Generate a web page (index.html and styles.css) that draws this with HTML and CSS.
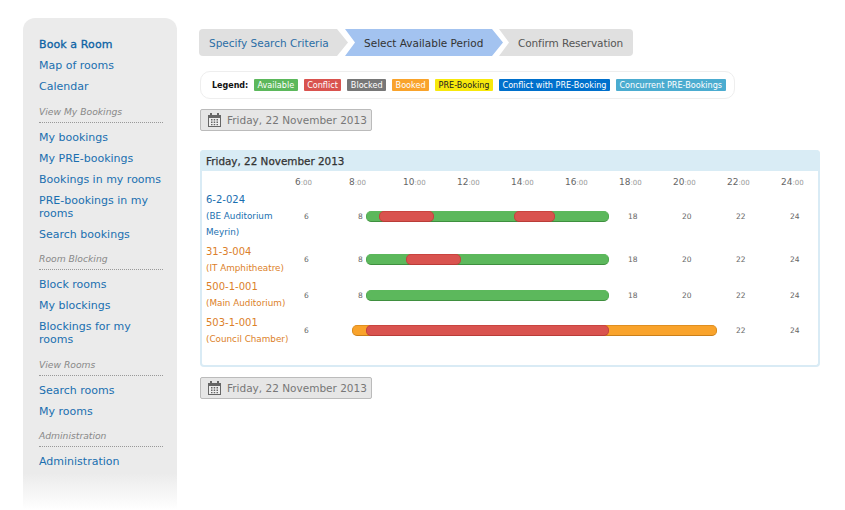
FILE: index.html
```html
<!DOCTYPE html>
<html lang="en">
<head>
  <meta charset="UTF-8">
  <title>Select Available Period</title>
  <link rel="stylesheet" href="styles.css">
</head>
<body>
  <nav class="sidebar">
    <ul class="menu">
      <li><a class="strong" href="#">Book a Room</a></li>
      <li><a href="#">Map of rooms</a></li>
      <li><a href="#">Calendar</a></li>
    </ul>
    <div class="menu-title">View My Bookings</div>
    <ul class="menu">
      <li><a href="#">My bookings</a></li>
      <li><a href="#">My PRE-bookings</a></li>
      <li><a href="#">Bookings in my rooms</a></li>
      <li><a href="#">PRE-bookings in my rooms</a></li>
      <li><a href="#">Search bookings</a></li>
    </ul>
    <div class="menu-title">Room Blocking</div>
    <ul class="menu">
      <li><a href="#">Block rooms</a></li>
      <li><a href="#">My blockings</a></li>
      <li><a href="#">Blockings for my rooms</a></li>
    </ul>
    <div class="menu-title">View Rooms</div>
    <ul class="menu">
      <li><a href="#">Search rooms</a></li>
      <li><a href="#">My rooms</a></li>
    </ul>
    <div class="menu-title">Administration</div>
    <ul class="menu">
      <li><a href="#">Administration</a></li>
    </ul>
  </nav>

  <main class="content">
    <div class="steps">
      <a class="step step-first" href="#">Specify Search Criteria</a>
      <span class="step step-current">Select Available Period</span>
      <span class="step step-last">Confirm Reservation</span>
    </div>

    <div class="legend">
      <strong class="legend-title">Legend:</strong>
      <span class="tag available">Available</span>
      <span class="tag conflict">Conflict</span>
      <span class="tag blocked">Blocked</span>
      <span class="tag booked">Booked</span>
      <span class="tag prebooking">PRE-Booking</span>
      <span class="tag preconflict">Conflict with PRE-Booking</span>
      <span class="tag concurrent">Concurrent PRE-Bookings</span>
    </div>

    <button class="date-btn" type="button">
      <svg class="cal" width="13" height="14" viewBox="0 0 13 14"><path fill="#666" d="M0 2h2V0h2v2h5V0h2v2h2v12H0z"/><path fill="#eee" d="M1 5h11v8H1z"/><path fill="#666" d="M3 6h1.500v1.500H3zM5.700 6h1.500v1.500H5.700zM8.500 6H10v1.500H8.500zM3 8.500h1.500V10H3zM5.700 8.500h1.500V10H5.700zM8.500 8.500H10V10H8.500zM3 11h1.500v1.200H3zM5.700 11h1.500v1.200H5.700zM8.500 11H10v1.200H8.500z"/></svg>
      Friday, 22 November 2013
    </button>

    <section class="day">
      <h2 class="day-title">Friday, 22 November 2013</h2>
      <div class="day-body">
        <div class="hours">
          <span class="hour">6<small>:00</small></span>
          <span class="hour">8<small>:00</small></span>
          <span class="hour">10<small>:00</small></span>
          <span class="hour">12<small>:00</small></span>
          <span class="hour">14<small>:00</small></span>
          <span class="hour">16<small>:00</small></span>
          <span class="hour">18<small>:00</small></span>
          <span class="hour">20<small>:00</small></span>
          <span class="hour">22<small>:00</small></span>
          <span class="hour">24<small>:00</small></span>
        </div>

        <div class="room">
          <a class="room-name" href="#">6-2-024<small>(BE Auditorium Meyrin)</small></a>
          <div class="timeline">
            <span>6</span><span>8</span><span></span><span></span><span></span><span></span><span>18</span><span>20</span><span>22</span><span>24</span>
            <i class="bar bar-free" style="left:87px;width:243px"></i>
            <i class="bar bar-conflict" style="left:100px;width:55px"></i>
            <i class="bar bar-conflict" style="left:235px;width:41px"></i>
          </div>
        </div>

        <div class="room">
          <a class="room-name orange" href="#">31-3-004<small>(IT Amphitheatre)</small></a>
          <div class="timeline">
            <span>6</span><span>8</span><span></span><span></span><span></span><span></span><span>18</span><span>20</span><span>22</span><span>24</span>
            <i class="bar bar-free" style="left:87px;width:243px"></i>
            <i class="bar bar-conflict" style="left:127px;width:55px"></i>
          </div>
        </div>

        <div class="room">
          <a class="room-name orange" href="#">500-1-001<small>(Main Auditorium)</small></a>
          <div class="timeline">
            <span>6</span><span>8</span><span></span><span></span><span></span><span></span><span>18</span><span>20</span><span>22</span><span>24</span>
            <i class="bar bar-free" style="left:87px;width:243px"></i>
          </div>
        </div>

        <div class="room">
          <a class="room-name orange" href="#">503-1-001<small>(Council Chamber)</small></a>
          <div class="timeline">
            <span>6</span><span></span><span></span><span></span><span></span><span></span><span></span><span></span><span>22</span><span>24</span>
            <i class="bar bar-booked" style="left:73px;width:365px"></i>
            <i class="bar bar-conflict" style="left:87px;width:243px"></i>
          </div>
        </div>
      </div>
    </section>

    <button class="date-btn" type="button">
      <svg class="cal" width="13" height="14" viewBox="0 0 13 14"><path fill="#666" d="M0 2h2V0h2v2h5V0h2v2h2v12H0z"/><path fill="#eee" d="M1 5h11v8H1z"/><path fill="#666" d="M3 6h1.500v1.500H3zM5.700 6h1.500v1.500H5.700zM8.500 6H10v1.500H8.500zM3 8.500h1.500V10H3zM5.700 8.500h1.500V10H5.700zM8.500 8.500H10V10H8.500zM3 11h1.500v1.200H3zM5.700 11h1.500v1.200H5.700zM8.500 11H10v1.200H8.500z"/></svg>
      Friday, 22 November 2013
    </button>
  </main>
</body>
</html>
```

FILE: styles.css
```css
* {
  box-sizing: border-box;
}

html, body {
  height: 510px;
  overflow: hidden;
}

body {
  display: flex;
  align-items: flex-start;
  margin: 0;
  background-color: white;
  font-family: 'DejaVu Sans', Verdana, sans-serif;
  font-size: 11px;
  color: #444;
}

a {
  text-decoration: none;
}

/* sidebar */

.sidebar {
  flex: none;
  width: 154px;
  height: 492px;
  margin: 18px 0 0 23px;
  padding: 20px 14px 0 16px;
  border-radius: 12px 12px 0 0;
  background: linear-gradient(to bottom, #ebebeb 0, #ebebeb 455px, #ffffff 492px);
}

.menu {
  list-style: none;
  margin: 0;
  padding: 0;
}

.menu li {
  margin-bottom: 8px;
  line-height: 13px;
}

.menu a {
  color: #1a6fb0;
}

.menu a.strong {
  color: #0b62a4;
  -webkit-text-stroke: 0.3px #0b62a4;
  letter-spacing: 0.1px;
}

.menu-title {
  margin: 11.500px 0 8px;
  padding-bottom: 4px;
  border-bottom: 1px dotted #999;
  font-size: 9.200px;
  line-height: 13px;
  font-style: italic;
  color: #888;
}

/* main column */

.content {
  flex: none;
  width: 621px;
  margin: 29px 0 0 23px;
}

.steps {
  display: flex;
  margin-left: -1px;
  height: 27px;
  font-size: 10.500px;
}

.step {
  display: flex;
  align-items: center;
  height: 27px;
  background-color: #e0e0e0;
  color: #555;
}

.step-first {
  width: 149px;
  padding-left: 10px;
  border-radius: 4px 0 0 4px;
  color: #2b6ea6;
  clip-path: polygon(0 0, 138px 0, 149px 50%, 138px 100%, 0 100%);
}

.step-current {
  width: 158px;
  margin-left: -3px;
  padding-left: 19px;
  background-color: #a3c3f0;
  color: #333;
  clip-path: polygon(0 0, 147px 0, 158px 50%, 147px 100%, 0 100%, 10px 50%);
}

.step-last {
  width: 134px;
  margin-left: -4px;
  padding-left: 19px;
  border-radius: 0 4px 4px 0;
  letter-spacing: -0.1px;
  clip-path: polygon(0 0, 100% 0, 100% 100%, 0 100%, 10px 50%);
}

.legend {
  display: flex;
  align-items: center;
  width: 535px;
  height: 28px;
  margin-top: 15px;
  padding-left: 11px;
  border: 1px solid #eee;
  border-radius: 10px;
}

.legend-title {
  flex: none;
  width: 42px;
  font-size: 8px;
  color: #111;
}

.tag {
  flex: none;
  height: 12px;
  margin-right: 6px;
  padding: 0 3.500px;
  border-radius: 1px;
  line-height: 12px;
  font-size: 8.100px;
  white-space: nowrap;
  color: white;
}

.available { background-color: #5cb85c; }
.conflict { background-color: #d9534f; }
.blocked { background-color: #777; }
.booked { background-color: #f9a32b; }
.prebooking { background-color: #f7e80c; color: #222; }
.preconflict { background-color: #0070cc; }
.concurrent { background-color: #4bacd0; }

.date-btn {
  display: flex;
  align-items: center;
  gap: 6px;
  width: 172px;
  height: 22px;
  margin: 10px 0 0;
  padding: 0 0 0 7px;
  border: 1px solid #bbb;
  border-radius: 2px;
  background-color: #e6e6e6;
  font-family: inherit;
  font-size: 10.500px;
  color: #777;
}

.day {
  width: 620px;
  margin-top: 19px;
  border: 1px solid #d9ebf5;
  border-width: 0 2px 2px;
  border-radius: 4px;
}

.day-title {
  height: 21px;
  margin: 0 -2px;
  padding-left: 6px;
  border-radius: 4px 4px 0 0;
  background-color: #d9ecf5;
  font-size: 10.400px;
  line-height: 22px;
  font-weight: normal;
  -webkit-text-stroke: 0.25px #333;
  color: #333;
}

.day-body {
  height: 194px;
  padding: 6px 0 0 4px;
}

.hours {
  display: flex;
  height: 15px;
  margin-left: 89px;
}

.hour {
  flex: none;
  width: 54px;
  font-size: 9px;
  line-height: 10px;
  color: #666;
}

.hour small {
  font-size: 7px;
  color: #999;
}

.room {
  display: flex;
  align-items: center;
  margin-bottom: 3.500px;
}

.room-name {
  flex: none;
  width: 88px;
  font-size: 10px;
  line-height: 16px;
  color: #1a6fb0;
}

.room-name.orange {
  color: #dc7f2a;
}

.room-name small {
  display: block;
  font-size: 8.800px;
}

.timeline {
  position: relative;
  display: flex;
  height: 11px;
  margin-left: -15px;
}

.timeline span {
  flex: none;
  width: 54px;
  padding-left: 25px;
  font-size: 7.500px;
  line-height: 12px;
  color: #666;
}

.bar {
  position: absolute;
  top: 0;
  height: 11px;
  border: 1px solid;
  border-radius: 5px;
}

.bar-free { background-color: #5cb85c; border-color: #5cb85c #4fa94f #3f8f3f; }
.bar-conflict { background-color: #d9534f; border-color: #c9443f #c4413d #b93c38; }
.bar-booked { background-color: #f9a32b; border-color: #e08f20 #d98a1a #c97f1a; }
```
